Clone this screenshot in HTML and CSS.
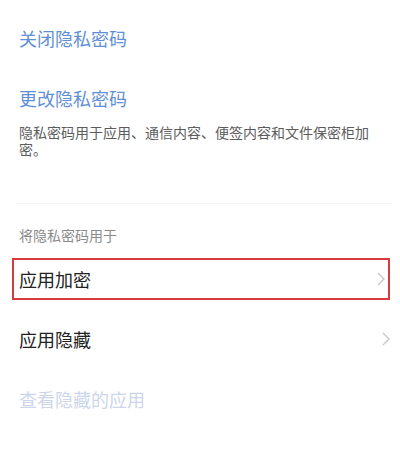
FILE: index.html
```html
<!DOCTYPE html>
<html lang="zh-CN">
<head>
    <meta charset="UTF-8">
    <meta name="viewport" content="width=device-width, initial-scale=1.0">
    <title>隐私密码</title>
    <link rel="stylesheet" href="styles.css">
</head>
<body>
    <div class="page">
        <div class="link-row">关闭隐私密码</div>
        <div class="link-row second">更改隐私密码</div>
        <p class="desc">隐私密码用于应用、通信内容、便签内容和文件保密柜加密。</p>
        <div class="divider"></div>
        <div class="section-title">将隐私密码用于</div>
        <div class="item highlight">
            <span>应用加密</span>
            <svg class="chevron" width="8" height="14" viewBox="0 0 8 14"><polyline points="1,1 7,7 1,13" /></svg>
        </div>
        <div class="item plain">
            <span>应用隐藏</span>
            <svg class="chevron" width="8" height="14" viewBox="0 0 8 14"><polyline points="1,1 7,7 1,13" /></svg>
        </div>
        <div class="link-row disabled">查看隐藏的应用</div>
    </div>
</body>
</html>
```

FILE: styles.css
```css
body {
    margin: 0;
    background: #fff;
    font-family: "Noto Sans CJK SC", "Noto Sans", sans-serif;
}

.page {
    padding-top: 8px;
}

.link-row {
    padding: 20px 24px 20px 19px;
    line-height: 20px;
    font-size: 18px;
    color: #5f8fd6;
}

.link-row.second {
    padding-bottom: 16px;
}

.link-row.disabled {
    margin-top: 0;
    color: #ccd6ea;
}

.desc {
    margin: 0;
    padding: 0 24px 0 19px;
    font-size: 14px;
    line-height: 17px;
    color: #5c5c5c;
}

.divider {
    height: 1px;
    margin: 45px 8px 0 16px;
    background: #f4f4f4;
}

.section-title {
    margin-top: 23px;
    padding-left: 19px;
    font-size: 14px;
    line-height: 17px;
    color: #8a8a8a;
}

.item {
    display: flex;
    justify-content: space-between;
    align-items: center;
    font-size: 18px;
    color: #222;
}

.item.highlight {
    margin: 14px 10px 0 12px;
    height: 38px;
    padding: 0 3px 0 5px;
    border: 2px solid #d83a40;
}

.item.plain {
    margin-top: 9px;
    height: 60px;
    padding: 0 10px 0 19px;
}

.chevron polyline {
    fill: none;
    stroke: #c6c6c6;
    stroke-width: 1.3;
}
```
